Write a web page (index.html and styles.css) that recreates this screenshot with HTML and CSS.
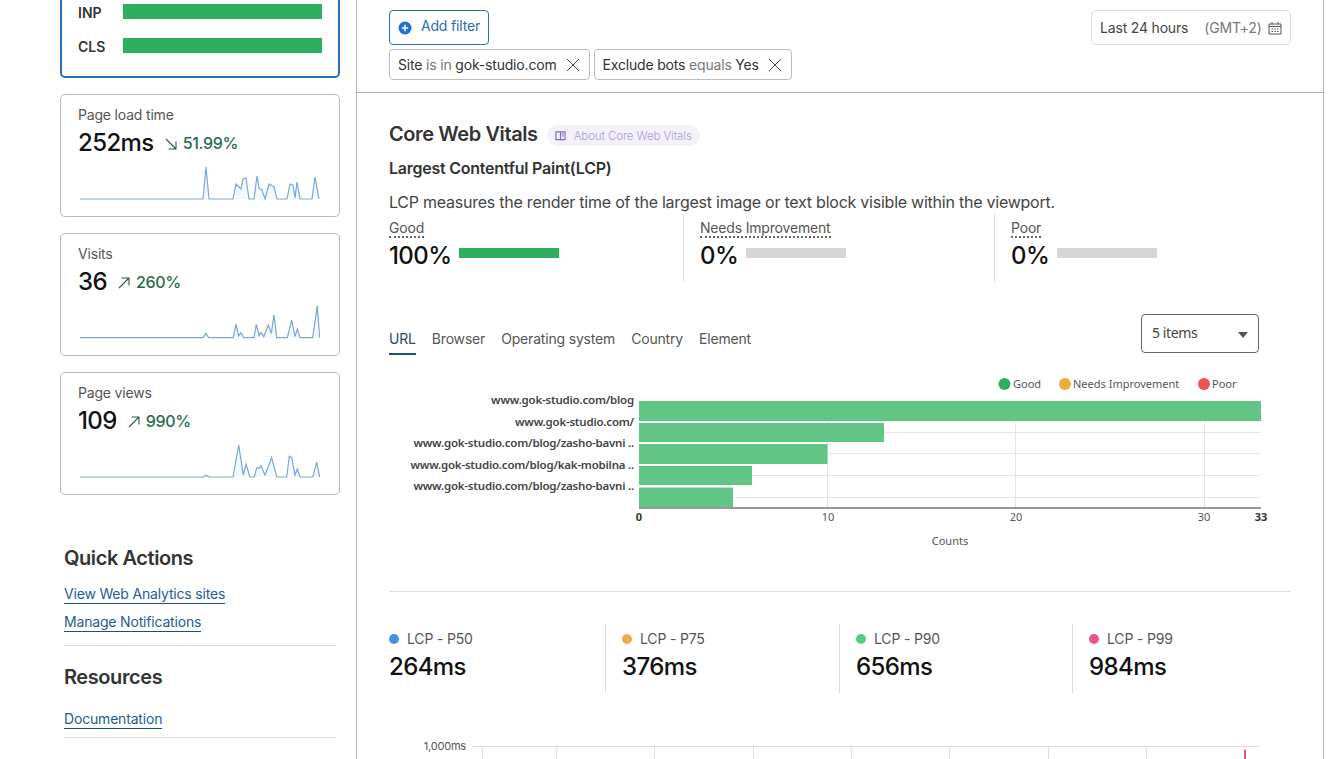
FILE: index.html
```html
<!DOCTYPE html>
<html lang="en">
<head>
<meta charset="utf-8">
<title>Core Web Vitals</title>
<link rel="stylesheet" href="styles.css">
</head>
<body>
<div class="app">
  <aside class="sidebar">
    <div class="card card-active">
      <div class="vital"><span class="vital-name">INP</span><span class="vital-bar"></span></div>
      <div class="vital"><span class="vital-name">CLS</span><span class="vital-bar"></span></div>
    </div>
    <div class="card">
      <div class="card-label">Page load time</div>
      <div class="card-value"><span class="num">252ms</span>
        <svg class="arrow" viewBox="0 0 14 14"><path d="M2 2L12 12M12 4.5V12H4.5"/></svg>
        <span class="delta">51.99%</span></div>
      <svg class="spark" viewBox="0 0 240 42"><polygon class="spark-fill" points="0,39 123,39 126,7 129,39 153,39 156,24 161,29 163,19 166,18 169,39 174,39 177,16 179,28 182,30 185,39 189,24 194,27 197,39 207,39 210,24 213,25 215,38 217,22 220,39 232,39 235,17 239,39"/><polyline class="spark-line" points="0,39 123,39 126,7 129,39 153,39 156,24 161,29 163,19 166,18 169,39 174,39 177,16 179,28 182,30 185,39 189,24 194,27 197,39 207,39 210,24 213,25 215,38 217,22 220,39 232,39 235,17 239,39"/></svg>
    </div>
    <div class="card">
      <div class="card-label">Visits</div>
      <div class="card-value"><span class="num">36</span>
        <svg class="arrow" viewBox="0 0 14 14"><path d="M2 12L12 2M4.5 2H12V9.5"/></svg>
        <span class="delta">260%</span></div>
      <svg class="spark" viewBox="0 0 240 42"><polygon class="spark-fill" points="0,38.7 123,38.7 126,34.3 128.7,38.7 153.3,38.7 156,25.3 158.7,36.7 161,33.7 163.7,38.7 174,38.7 176.3,25.3 179,36.7 181,33.7 183.7,37.7 188.3,26 191.3,34.3 194,16 196.7,38.7 207.3,38.7 211.7,21 215,37.7 217.3,30 220,38.7 232.7,38.7 237.3,6.7 239.7,38.7"/><polyline class="spark-line" points="0,38.7 123,38.7 126,34.3 128.7,38.7 153.3,38.7 156,25.3 158.7,36.7 161,33.7 163.7,38.7 174,38.7 176.3,25.3 179,36.7 181,33.7 183.7,37.7 188.3,26 191.3,34.3 194,16 196.7,38.7 207.3,38.7 211.7,21 215,37.7 217.3,30 220,38.7 232.7,38.7 237.3,6.7 239.7,38.7"/></svg>
    </div>
    <div class="card">
      <div class="card-label">Page views</div>
      <div class="card-value"><span class="num">109</span>
        <svg class="arrow" viewBox="0 0 14 14"><path d="M2 12L12 2M4.5 2H12V9.5"/></svg>
        <span class="delta">990%</span></div>
      <svg class="spark" viewBox="0 0 240 42"><polygon class="spark-fill" points="0,39 123,39 126,37.3 129,39 153,39 158.7,7 163.3,37 166,26.3 170,39 174.3,39 176.7,29.7 179,30.3 181,27.7 185,37 191.7,19.7 196.7,39 206.7,39 209.3,18.3 211.7,19.7 215,37 217.3,31 220,39 232.7,39 236.7,24.3 239.7,39"/><polyline class="spark-line" points="0,39 123,39 126,37.3 129,39 153,39 158.7,7 163.3,37 166,26.3 170,39 174.3,39 176.7,29.7 179,30.3 181,27.7 185,37 191.7,19.7 196.7,39 206.7,39 209.3,18.3 211.7,19.7 215,37 217.3,31 220,39 232.7,39 236.7,24.3 239.7,39"/></svg>
    </div>

    <section class="side-section">
      <h2 class="side-title">Quick Actions</h2>
      <a class="side-link" href="#">View Web Analytics sites</a>
      <a class="side-link" href="#">Manage Notifications</a>
      <hr class="side-rule">
      <h2 class="side-title side-title-res">Resources</h2>
      <a class="side-link side-link-doc" href="#">Documentation</a>
      <hr class="side-rule side-rule-doc">
    </section>
  </aside>

  <main class="main">
    <header class="toolbar">
      <div class="filters">
        <button class="add-filter">
          <svg class="plus" viewBox="0 0 14 14"><circle cx="7" cy="7" r="6.5"/><path d="M7 3.8V10.2M3.8 7H10.2"/></svg>
          <span class="add-text">Add filter</span>
        </button>
        <div class="chips">
          <div class="chip"><span>Site <span class="muted">is in</span> gok-studio.com</span>
            <svg class="close" viewBox="0 0 14 14"><path d="M1 1L13 13M13 1L1 13"/></svg></div>
          <div class="chip"><span>Exclude bots <span class="muted">equals</span> Yes</span>
            <svg class="close" viewBox="0 0 14 14"><path d="M1 1L13 13M13 1L1 13"/></svg></div>
        </div>
      </div>
      <div class="date"><span>Last 24 hours</span><span class="muted date-zone">(GMT+2)</span>
        <svg class="calendar" viewBox="0 0 14 14"><path d="M1 3H13V13H1ZM1 5.500H13M4 1V3.500M10 1V3.500M3.500 8H5M6.300 8H7.800M9 8H10.500M3.500 10.500H5M6.300 10.500H7.800M9 10.500H10.500"/></svg>
      </div>
    </header>

    <div class="content">
      <div class="title-row">
        <h1 class="title">Core Web Vitals</h1>
        <span class="about">
          <svg class="book" viewBox="0 0 12 12"><path d="M1 2H11V10.500H1ZM6 2V10.500M7.500 4.500H9.500M7.500 6.500H9.500"/></svg>
          About Core Web Vitals</span>
      </div>
      <h2 class="metric-title">Largest Contentful Paint(LCP)</h2>
      <p class="metric-desc">LCP measures the render time of the largest image or text block visible within the viewport.</p>

      <div class="ratings">
        <div class="rating">
          <div class="rating-label"><span class="dotted">Good</span></div>
          <div class="rating-row"><span class="num">100%</span><span class="rating-bar rating-bar-good"></span></div>
        </div>
        <div class="rating">
          <div class="rating-label"><span class="dotted">Needs Improvement</span></div>
          <div class="rating-row"><span class="num">0%</span><span class="rating-bar"></span></div>
        </div>
        <div class="rating">
          <div class="rating-label"><span class="dotted">Poor</span></div>
          <div class="rating-row"><span class="num">0%</span><span class="rating-bar"></span></div>
        </div>
      </div>

      <div class="tabs-row">
        <nav class="tabs">
          <span class="tab tab-active">URL</span>
          <span class="tab">Browser</span>
          <span class="tab">Operating system</span>
          <span class="tab">Country</span>
          <span class="tab">Element</span>
        </nav>
        <div class="select"><span class="select-text">5 items</span><span class="caret"></span></div>
      </div>

      <svg class="chart" viewBox="389 374 902 180">
        <circle cx="1004.500" cy="384" r="6" fill="#2eaf60"/>
        <text class="legend" x="1013" y="388">Good</text>
        <circle cx="1065" cy="384" r="6" fill="#f5a93a"/>
        <text class="legend" x="1073" y="388">Needs Improvement</text>
        <circle cx="1204" cy="384" r="6" fill="#ef5350"/>
        <text class="legend" x="1212" y="388">Poor</text>

        <g class="grid">
          <path d="M639 432.500H1261M639 453.500H1261M639 475.500H1261M639 497.500H1261M827.500 401V508M1015.500 401V508M1204.500 401V508"/>
        </g>
        <rect class="bar" x="639" y="401" width="622" height="20"/>
        <rect class="bar" x="639" y="423" width="245" height="19"/>
        <rect class="bar" x="639" y="444" width="188.500" height="20"/>
        <rect class="bar" x="639" y="466" width="113" height="19"/>
        <rect class="bar" x="639" y="487.500" width="94" height="19.500"/>
        <path class="axis" d="M639 508H1261"/>

        <text class="ylabel" x="634" y="403.500">www.gok-studio.com/blog</text>
        <text class="ylabel" x="634" y="425.500">www.gok-studio.com/</text>
        <text class="ylabel" x="634" y="446.500">www.gok-studio.com/blog/zasho-bavni ..</text>
        <text class="ylabel" x="634" y="468.500">www.gok-studio.com/blog/kak-mobilna ..</text>
        <text class="ylabel" x="634" y="489.500">www.gok-studio.com/blog/zasho-bavni ..</text>

        <text class="tick tick-bold" x="639" y="521">0</text>
        <text class="tick" x="828" y="521">10</text>
        <text class="tick" x="1016" y="521">20</text>
        <text class="tick" x="1204" y="521">30</text>
        <text class="tick tick-bold" x="1261" y="521">33</text>
        <text class="tick" x="950" y="545">Counts</text>
      </svg>

      <hr class="rule">

      <div class="stats">
        <div class="stat">
          <div class="stat-label"><span class="dot dot-blue"></span>LCP - P50</div>
          <div class="num stat-value">264ms</div>
        </div>
        <div class="stat">
          <div class="stat-label"><span class="dot dot-orange"></span>LCP - P75</div>
          <div class="num stat-value">376ms</div>
        </div>
        <div class="stat">
          <div class="stat-label"><span class="dot dot-green"></span>LCP - P90</div>
          <div class="num stat-value">656ms</div>
        </div>
        <div class="stat">
          <div class="stat-label"><span class="dot dot-pink"></span>LCP - P99</div>
          <div class="num stat-value">984ms</div>
        </div>
      </div>

      <svg class="chart-bottom" viewBox="389 738 902 21">
        <text class="time-tick" x="466" y="750">1,000ms</text>
        <path class="time-grid" d="M472 746.500H1260M482.500 746V759M556.500 746V759M654.500 746V759M753.500 746V759M851.500 746V759M949.500 746V759M1048.500 746V759M1146.500 746V759M1244.500 746V759"/>
        <path class="time-mark" d="M1245 750V759"/>
      </svg>
    </div>
  </main>
</div>
</body>
</html>
```

FILE: styles.css
```css
* { box-sizing: border-box; }

html, body {
  margin: 0;
  height: 759px;
  overflow: hidden;
  background: #fff;
}

body {
  font-family: Inter, "Liberation Sans", sans-serif;
  font-size: 14px;
  letter-spacing: -0.18px;
  color: #333;
}

.app {
  display: flex;
  width: 1324px;
  height: 759px;
  overflow: hidden;
}

.sidebar {
  flex: 0 0 357px;
  padding: 0 16px 0 60px;
  border-right: 1px solid #b4b4b4;
  display: flex;
  flex-direction: column;
  gap: 16px;
  height: 775px;
  margin-top: -16px;
}

.card {
  width: 280px;
  height: 123px;
  flex: none;
  padding: 11px 17px 0;
  border: 1px solid #b9b9b9;
  border-radius: 5px;
  background: #fff;
}

.card-active {
  height: 94px;
  padding: 18px 16px 0;
  border: 2px solid #2a6ebb;
  display: flex;
  flex-direction: column;
  gap: 19px;
}

.vital {
  display: flex;
  align-items: center;
  height: 15px;
}

.vital-name {
  width: 45px;
  padding-top: 2px;
  font-size: 14px;
  font-weight: 600;
  letter-spacing: 0;
  color: #333;
}

.vital-bar {
  width: 200px;
  height: 15px;
  background: #2eaf60;
}

.card-label {
  font-size: 14px;
  line-height: 17px;
  color: #555;
}

.card-value {
  display: flex;
  align-items: center;
  height: 32px;
  margin-top: 4px;
}

.num {
  font-size: 24px;
  line-height: 32px;
  font-weight: 500;
  color: #111;
  letter-spacing: -0.6px;
}

.arrow {
  flex: none;
  width: 14px;
  height: 14px;
  margin: 2px 5px 0 10px;
  fill: none;
  stroke: #2c5a45;
  stroke-width: 1.1;
}

.delta {
  font-size: 16px;
  font-weight: 500;
  letter-spacing: -0.3px;
  color: #2a6b4b;
}

.spark {
  display: block;
  width: 240px;
  height: 42px;
  margin: 1px 0 0 2px;
}

.spark-fill { fill: #f3f8fe; stroke: none; }
.spark-line { fill: none; stroke: #7aa6da; stroke-width: 1.2; }

.side-section {
  padding: 35px 0 0 4px;
  width: 276px;
}

.side-title {
  margin: 0;
  font-size: 20px;
  line-height: 24px;
  font-weight: 600;
  color: #333;
  letter-spacing: -0.42px;
}

.side-title-res { margin-top: 19px; }

.side-link {
  display: block;
  width: fit-content;
  margin-top: 7px;
  padding-top: 2px;
  font-size: 14px;
  line-height: 18px;
  color: #1f5c99;
  text-decoration: none;
  border-bottom: 1px solid #1b4f7c;
}

.side-title + .side-link { margin-top: 13px; }
.side-title-res + .side-link-doc { margin-top: 19px; }

.side-rule {
  margin: 13px 0 0;
  border: 0;
  border-top: 1px solid #d9d9d9;
}

.side-rule-doc { margin-top: 8px; }

/* Main */
.main {
  flex: 0 0 967px;
  border-right: 1px solid #b4b4b4;
}

.toolbar {
  display: flex;
  justify-content: space-between;
  align-items: flex-start;
  height: 93px;
  padding: 10px 32px 0;
  border-bottom: 1px solid #b4b4b4;
}

.filters {
  display: flex;
  flex-direction: column;
  align-items: flex-start;
  gap: 4px;
}

.add-filter {
  display: flex;
  align-items: center;
  width: 100px;
  height: 35px;
  padding: 0 0 0 8px;
  border: 1px solid #2a6ebb;
  border-radius: 4px;
  background: #fff;
  font: inherit;
  letter-spacing: inherit;
  color: #2a6ebb;
}

.plus {
  flex: none;
  width: 14px;
  height: 14px;
  margin: 1px 9px 0 0;
  fill: #1f6fd6;
  stroke: none;
}

.plus path { stroke: #fff; stroke-width: 1.5; }

.add-text {
  margin-top: -4px;
  font-size: 14px;
}

.chips {
  display: flex;
  gap: 4px;
}

.chip {
  display: flex;
  align-items: center;
  height: 31px;
  padding: 0 9px 0 8px;
  border: 1px solid #bdbdbd;
  border-radius: 4px;
  font-size: 14px;
  color: #333;
  white-space: nowrap;
}

.muted { color: #777; }

.close {
  flex: none;
  width: 14px;
  height: 14px;
  margin-left: 9px;
  fill: none;
  stroke: #444;
  stroke-width: 1;
}

.date {
  display: flex;
  align-items: center;
  width: 200px;
  height: 35px;
  padding: 0 9px 0 8px;
  border: 1px solid #dcdcdc;
  border-radius: 5px;
  font-size: 14px;
  color: #444;
  white-space: nowrap;
}

.date-zone { margin-left: 16px; }

.calendar {
  flex: none;
  width: 14px;
  height: 14px;
  margin-left: 6px;
  fill: none;
  stroke: #555;
  stroke-width: 1;
}

.content { padding: 29px 32px 0; }

.title-row {
  display: flex;
  align-items: center;
  height: 24px;
}

.title {
  margin: 0;
  font-size: 20px;
  line-height: 24px;
  font-weight: 600;
  color: #333;
  letter-spacing: -0.4px;
}

.about {
  display: flex;
  align-items: center;
  height: 21px;
  margin: 3px 0 0 9px;
  padding: 0 8px;
  border-radius: 11px;
  background: #f4f1fb;
  font-size: 11.5px;
  font-weight: 300;
  color: #a99cd8;
  white-space: nowrap;
  letter-spacing: -0.1px;
}

.book {
  flex: none;
  width: 11px;
  height: 11px;
  margin-right: 8px;
  fill: none;
  stroke: #7d68c4;
  stroke-width: 1.2;
}

.metric-title {
  margin: 12px 0 0;
  font-size: 16px;
  line-height: 20px;
  font-weight: 600;
  color: #333;
  letter-spacing: -0.24px;
}

.metric-desc {
  margin: 12px 0 0;
  font-size: 16px;
  line-height: 24px;
  color: #444;
  letter-spacing: -0.24px;
}

.ratings {
  display: grid;
  grid-template-columns: 295px 311px 1fr;
  height: 68px;
}

.rating {
  padding: 4px 0 0 16px;
  border-right: 1px solid #dcdcdc;
}

.rating:first-child { padding-left: 0; }
.rating:last-child { border-right: 0; }

.rating-label {
  height: 20px;
  font-size: 14px;
  line-height: 16px;
  color: #555;
}

.dotted {
  display: inline-block;
  padding-top: 2px;
  border-bottom: 2px dotted #666;
}

.rating-row {
  display: flex;
  align-items: center;
  height: 32px;
  margin-top: 2px;
  gap: 8px;
}

.rating-bar {
  width: 100px;
  height: 10px;
  margin-bottom: 6px;
  background: #d6d6d6;
}

.rating-bar-good { background: #2eaf60; }

.tabs-row {
  display: flex;
  justify-content: space-between;
  align-items: flex-start;
  height: 41px;
  margin-top: 32px;
  padding-right: 32px;
}

.tabs {
  display: flex;
  gap: 16px;
  margin-top: 15px;
}

.tab {
  height: 26px;
  line-height: 20px;
  font-size: 14px;
  color: #555;
  border-bottom: 2px solid transparent;
}

.tab-active {
  color: #2c4a66;
  border-bottom-color: #1b4f7c;
}

.select {
  display: flex;
  align-items: center;
  justify-content: space-between;
  width: 118px;
  height: 39px;
  padding: 0 10px;
  border: 1px solid #666;
  border-radius: 4px;
  font-family: "Noto Sans", sans-serif;
  font-size: 14px;
  letter-spacing: -0.4px;
  color: #444;
}

.select-text { margin-top: -2px; }

.caret {
  width: 0;
  height: 0;
  margin-top: 3px;
  border-left: 5px solid transparent;
  border-right: 5px solid transparent;
  border-top: 6px solid #555;
}

.chart {
  display: block;
  width: 902px;
  height: 180px;
  margin-top: 19px;
  font-family: "Noto Sans", sans-serif;
  letter-spacing: 0;
}

.legend { font-size: 11px; fill: #555; }
.grid path { fill: none; stroke: #e6e6e6; stroke-width: 1; }
.bar { fill: #61c586; }
.axis { fill: none; stroke: #333; stroke-width: 1; }

.ylabel {
  font-size: 11.5px;
  font-weight: 600;
  letter-spacing: -0.21px;
  fill: #444;
  text-anchor: end;
}

.tick {
  font-size: 11px;
  fill: #555;
  text-anchor: middle;
}

.tick-bold { font-weight: 700; fill: #333; }

.rule {
  margin: 37px 0 0;
  border: 0;
  border-top: 1px solid #dedede;
}

.stats {
  display: grid;
  grid-template-columns: 216px 234px 233px 1fr;
  height: 69px;
  margin-top: 32px;
}

.stat {
  padding: 5px 0 0 16px;
  border-left: 1px solid #dcdcdc;
}

.stat:first-child {
  padding-left: 0;
  border-left: 0;
}

.stat-label {
  display: flex;
  align-items: center;
  font-size: 14px;
  line-height: 20px;
  color: #555;
}

.dot {
  width: 10px;
  height: 10px;
  margin-right: 8px;
  border-radius: 50%;
}

.dot-blue { background: #4a8fe7; }
.dot-orange { background: #f2a94e; }
.dot-green { background: #5ccb85; }
.dot-pink { background: #e8558c; }

.stat-value { margin-top: 2px; }

.chart-bottom {
  display: block;
  width: 902px;
  height: 21px;
  margin-top: 45px;
}

.time-tick {
  font-size: 11px;
  fill: #555;
  text-anchor: end;
}

.time-grid { fill: none; stroke: #e0e0e0; stroke-width: 1; }
.time-mark { fill: none; stroke: #d9587e; stroke-width: 2; }
```
